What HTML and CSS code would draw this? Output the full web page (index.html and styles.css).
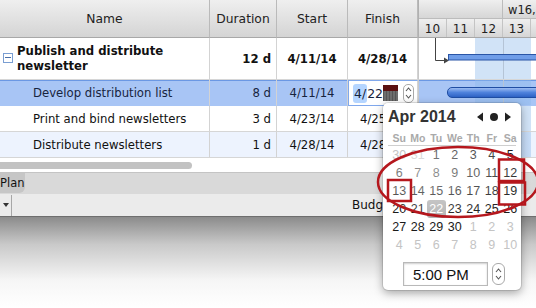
FILE: index.html
```html
<!doctype html>
<html lang="en">
<head>
  <meta charset="utf-8" />
  <title>Plan - Gantt</title>
  <link rel="stylesheet" href="styles.css">
</head>
<body>
<div class="app">

  <div class="table">
    <div class="row head">
      <div class="cell">Name</div>
      <div class="cell">Duration</div>
      <div class="cell">Start</div>
      <div class="cell">Finish</div>
      <div class="cell gantt-head">
        <div class="weeks"><span class="wk"></span><span class="wk">w16,</span></div>
        <div class="days"><span>10</span><span>11</span><span>12</span><span>13</span><span>14</span></div>
      </div>
    </div>

    <div class="row summary">
      <div class="cell name">
        <span class="toggle"></span>
        <span>Publish and distribute<br>newsletter</span>
      </div>
      <div class="cell num">12 d</div>
      <div class="cell date">4/11/14</div>
      <div class="cell date">4/28/14</div>
      <div class="cell gantt">
        <svg width="117" height="42" viewBox="0 0 117 42">
          <path d="M16.5 0 V22.5 H26" fill="none" stroke="#444" stroke-width="1"/>
          <path d="M25 19.5 L30 22.5 L25 25.5 Z" fill="#444"/>
          <rect x="29.5" y="16.5" width="100" height="5.5" fill="#6f9de8" stroke="#2a55a6"/>
        </svg>
      </div>
    </div>

    <div class="row sel">
      <div class="cell name sub">Develop distribution list</div>
      <div class="cell num">8 d</div>
      <div class="cell date">4/11/14</div>
      <div class="cell edit">
        <span class="val"><span class="hl">4/</span>22</span>
        <span class="cal-ico"></span>
        <span class="step">
          <svg width="7" height="14" viewBox="0 0 7 14"><path d="M1 5 L3.5 2 L6 5 M1 9 L3.5 12 L6 9" fill="none" stroke="#555" stroke-width="1.1"/></svg>
        </span>
      </div>
      <div class="cell gantt"><div class="bar"></div></div>
    </div>

    <div class="row">
      <div class="cell name sub">Print and bind newsletters</div>
      <div class="cell num">3 d</div>
      <div class="cell date">4/23/14</div>
      <div class="cell date">4/25/14</div>
      <div class="cell gantt"></div>
    </div>

    <div class="row alt">
      <div class="cell name sub">Distribute newsletters</div>
      <div class="cell num">1 d</div>
      <div class="cell date">4/28/14</div>
      <div class="cell date">4/28/14</div>
      <div class="cell gantt"></div>
    </div>
  </div>

  <div class="hscroll"><div class="thumb"></div></div>

  <div class="tabs"><div class="tab">Plan</div></div>

  <div class="toolbar">
    <div class="drop">
      <svg width="6" height="4" viewBox="0 0 6 4"><path d="M0 0 H6 L3 4 Z" fill="#333"/></svg>
    </div>
    <span class="budget">Budget</span>
  </div>

  <div class="shade"></div>

  <!-- date picker popover -->
  <div class="picker">
    <div class="pk-head">
      <span class="month">Apr 2014</span>
      <span class="nav">
        <svg width="36" height="10" viewBox="0 0 36 10">
          <path d="M6 0.5 V9.5 L0 5 Z" fill="#222"/>
          <circle cx="17" cy="5" r="4" fill="#222"/>
          <path d="M28 0.5 V9.5 L34 5 Z" fill="#222"/>
        </svg>
      </span>
    </div>
    <div class="pk-week">
      <span>Su</span><span>Mo</span><span>Tu</span><span>We</span><span>Th</span><span>Fr</span><span>Sa</span>
    </div>
    <div class="pk-days">
      <span class="off">30</span><span class="off">31</span><span>1</span><span>2</span><span>3</span><span>4</span><span>5</span>
      <span>6</span><span>7</span><span>8</span><span>9</span><span>10</span><span>11</span><span>12</span>
      <span>13</span><span>14</span><span>15</span><span>16</span><span>17</span><span>18</span><span>19</span>
      <span>20</span><span>21</span><span class="today">22</span><span>23</span><span>24</span><span>25</span><span>26</span>
      <span>27</span><span>28</span><span>29</span><span>30</span><span class="off">1</span><span class="off">2</span><span class="off">3</span>
      <span class="off">4</span><span class="off">5</span><span class="off">6</span><span class="off">7</span><span class="off">8</span><span class="off">9</span><span class="off">10</span>
    </div>
    <div class="pk-time">
      <div class="time">5:00 PM</div>
      <span class="step big">
        <svg width="7" height="16" viewBox="0 0 7 16"><path d="M1 6 L3.5 3 L6 6 M1 10 L3.5 13 L6 10" fill="none" stroke="#555" stroke-width="1.1"/></svg>
      </span>
    </div>
  </div>

  <!-- red annotation marks -->
  <svg class="marks" width="536" height="308" viewBox="0 0 536 308">
    <defs>
      <radialGradient id="glow" cx="0.3" cy="0.35" r="0.7">
        <stop offset="0" stop-color="#fff" stop-opacity="0.55"/>
        <stop offset="1" stop-color="#fff" stop-opacity="0"/>
      </radialGradient>
    </defs>
    <ellipse cx="458" cy="182" rx="80" ry="35" fill="url(#glow)" stroke="#b5171d" stroke-width="2.5"/>
    <rect x="499" y="159.5" width="25" height="21.5" fill="none" stroke="#b5171d" stroke-width="2.5"/>
    <rect x="388" y="180" width="23" height="21" fill="none" stroke="#b5171d" stroke-width="2.5"/>
    <rect x="499" y="182.5" width="26" height="22" fill="none" stroke="#b5171d" stroke-width="2.5"/>
  </svg>

</div>
</body>
</html>
```

FILE: styles.css
```css
/* ───────────── page ───────────── */
body{
  margin:0;
  width:536px;
  height:308px;
  overflow:hidden;
  background:#fff;
  font-family:"DejaVu Sans","Noto Sans",sans-serif;
  font-size:11.7px;
  color:#111;
}
.app{
  position:relative;
  height:308px;
  display:flex;
  flex-direction:column;
}

/* ───────────── table ───────────── */
.row{
  display:grid;
  grid-template-columns:210px 67px 71px 70px 118px;
  height:26px;
}
.cell{
  box-sizing:border-box;
  display:flex;
  align-items:center;
  border-right:1px solid #d3d3d3;
  border-bottom:1px solid #d6d6d6;
  white-space:nowrap;
  overflow:hidden;
}
.cell.num{ justify-content:flex-end; padding-right:5px; }
.cell.date{ justify-content:center; }
.cell.name.sub{ padding-left:33px; }

.head{ height:38px; }
.head .cell{
  justify-content:center;
  background:linear-gradient(#efefef,#d4d4d4);
  border-right-color:#bababa;
  border-bottom:1px solid #a8a8a8;
  font-size:12.3px;
  color:#222;
}
.head .gantt-head{
  flex-direction:column;
  align-items:stretch;
  border-right:none;
  border-left:1px solid #b0b0b0;
  background:none;
}
.weeks,.days{ display:flex; background:linear-gradient(#efefef,#d6d6d6); }
.weeks{ height:18px; border-bottom:1px solid #bcbcbc; }
.weeks .wk{
  box-sizing:border-box;
  width:84px;
  flex:none;
  border-right:1px solid #bcbcbc;
  padding:3px 0 0 5px;
  font-size:11.5px;
}
.weeks .wk + .wk{ border-right:none; width:33px; }
.days{ flex:1; }
.days span{
  box-sizing:border-box;
  width:28px;
  flex:none;
  border-right:1px solid #c4c4c4;
  text-align:center;
  padding-top:3px;
  font-size:12px;
}

.summary{ height:42px; }
.summary .cell{ font-weight:bold; font-size:11.7px; }
.summary .name{ padding-left:3px; gap:4px; line-height:15px; }
.toggle{
  position:relative;
  box-sizing:border-box;
  width:10px;
  height:10px;
  flex:none;
  border:1px solid #7a9ed2;
  align-self:center;
  margin-top:-2px;
}
.toggle::after{
  content:"";
  position:absolute;
  left:1px;
  right:1px;
  top:3px;
  height:1px;
  background:#4a6fa8;
}

.gantt{
  border-right:none;
  border-left:1px solid #c8c8c8;
  align-items:flex-start;
  background-image:linear-gradient(90deg,
    transparent 56px, rgba(140,185,235,.4) 56px,
    rgba(140,185,235,.4) 84px, #b5c4d6 84px, #b5c4d6 85px,
    rgba(140,185,235,.4) 85px, rgba(140,185,235,.4) 112px, transparent 112px);
}

.sel{
  background:#a8c5f5;
  box-shadow:inset 0 1px #6b98e4;
  color:#17243e;
}
.sel .cell{ border-bottom-color:#a8c5f5; }
.alt{ background:#edf3fe; }

.cell.edit{
  background:#fff;
  border:1px solid #80a8ec;
  border-right-color:#d3d3d3;
  padding-left:4px;
}
.val{ position:relative; font-size:12.5px; width:30px; }
.hl{ background:#b5d5ff; border-radius:3px; padding:2px 1px 2px 1px; }
.cal-ico{
  box-sizing:border-box;
  width:15px;
  height:16px;
  flex:none;
  margin-left:0;
  background:
    linear-gradient(#5b1111 0 6px, transparent 6px),
    repeating-linear-gradient(90deg,#555 0 1px,transparent 1px 3px),
    #6d6d6d;
}
.step{
  box-sizing:border-box;
  width:11px;
  height:19px;
  margin-left:5px;
  flex:none;
  border:1px solid #a9a9a9;
  border-radius:5px;
  background:#fff;
  display:flex;
  align-items:center;
  justify-content:center;
}
.bar{
  margin:7px 0 0 28px;
  width:120px;
  height:9px;
  flex:none;
  border:1px solid #1f4da3;
  border-radius:5px 0 0 5px;
  background:linear-gradient(#9cbcf2,#4f82dc 50%,#2e62c4);
}

/* ───────────── scroll, tabs, toolbar ───────────── */
.hscroll{ height:14px; padding-top:4px; box-sizing:border-box; }
.thumb{ width:192px; height:7px; background:#c2c2c2; border-radius:0 4px 4px 0; }

.tabs{
  height:22px;
  background:#d9d9d9;
  border-top:1px solid #c4c4c4;
  box-sizing:border-box;
  display:flex;
}
.tab{
  width:25px;
  height:20px;
  background:#c6c6c6;
  border-radius:0 0 6px 0;
  font-size:11.5px;
  line-height:20px;
  overflow:hidden;
}

.toolbar{
  height:22px;
  background:#ebebeb;
  border-bottom:1px solid #6e6e6e;
  display:flex;
  align-items:center;
}
.drop{
  width:12px;
  height:21px;
  border-right:1px solid #a7a7a7;
  display:flex;
  align-items:center;
  justify-content:flex-end;
  padding-right:2px;
  box-sizing:border-box;
}
.budget{ margin-left:340px; font-size:12px; color:#111; }

.shade{
  flex:1;
  background:linear-gradient(#8b8b8b, #c9c9c9 30%, #f6f6f6 70%, #fff);
}

/* ───────────── date picker ───────────── */
.picker{
  position:absolute;
  left:383px;
  top:103px;
  width:138px;
  height:187px;
  box-sizing:border-box;
  background:#fff;
  border-radius:5px;
  box-shadow:0 3px 10px rgba(0,0,0,.35),0 0 0 1px rgba(0,0,0,.1);
  font-family:"Liberation Sans",Arial,sans-serif;
}
.pk-head{
  height:28px;
  display:flex;
  align-items:center;
  justify-content:space-between;
  padding:0 5px 0 5px;
}
.month{ font-size:16px; font-weight:bold; color:#333; }
.nav{ display:flex; margin-right:3px; }
.pk-week,.pk-days{
  display:grid;
  grid-template-columns:repeat(7,18.5px);
  margin:0 2px 0 7px;
}
.pk-week{
  height:14px;
  align-items:center;
  margin:0 5px;
  padding-left:2px;
  border-bottom:1px solid #cfcfcf;
  font-size:10.5px;
  font-weight:bold;
  color:#aaa;
}
.pk-week span{ text-align:center; }
.pk-days{ grid-auto-rows:18px; font-size:12.5px; color:#1a1a1a; }
.pk-days span{ display:flex; align-items:center; justify-content:center; }
.pk-days .off{ color:#c4c4c4; }
.pk-days .today{ background:#b4b4b4; color:#fff; border-radius:3px; }
.pk-time{
  display:flex;
  align-items:center;
  margin:8px 0 0 20px;
}
.time{
  box-sizing:border-box;
  width:85px;
  height:24px;
  border:1px solid #b9b9b9;
  box-shadow:inset 0 1px 2px rgba(0,0,0,.2);
  padding-left:9px;
  font-size:15px;
  line-height:23px;
  color:#111;
}
.step.big{ width:13px; height:22px; margin-left:4px; border-radius:6px; }

.marks{ position:absolute; left:0; top:0; pointer-events:none; }
```
